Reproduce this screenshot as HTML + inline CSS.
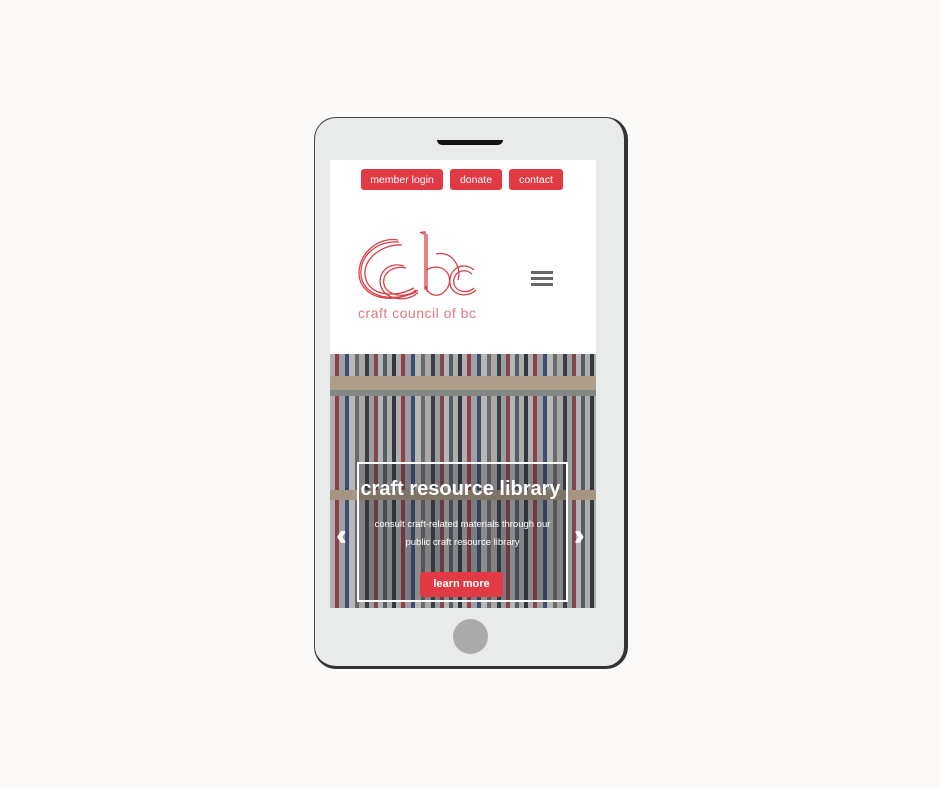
<!DOCTYPE html>
<html><head><style>
body{margin:0;width:940px;height:788px;background:#fbfaf8;position:relative;overflow:hidden;font-family:"Liberation Sans",sans-serif}
.phone{position:absolute;left:314px;top:117px;width:309px;height:548px;background:#e9eaea;border:1.5px solid #444;border-right:4px solid #333;border-bottom:3px solid #333;border-radius:22px}
.spk{position:absolute;left:437px;top:140px;width:66px;height:5px;background:#111;border-radius:0 0 6px 6px}
.screen{position:absolute;left:330px;top:160px;width:266px;height:448px;background:#fff;overflow:hidden}
.btn{position:absolute;top:9px;height:21px;background:#e23a44;color:#fff;font-size:10.5px;line-height:22px;text-align:center;border-radius:3px}
.photo{position:absolute;left:0;top:194px;width:266px;height:254px;background:
linear-gradient(to bottom,transparent 0 22px,#d9c4a8 22px 36px,#a0a49e 36px 42px,transparent 42px 136px,#cdb89c 136px 146px,transparent 146px),
repeating-linear-gradient(90deg,#dcdcda 0 5px,#b04048 5px 9px,#c4c8cc 9px 15px,#3d5282 15px 19px,#e8e8e6 19px 25px,#7a7a80 25px 29px,#d6d2cc 29px 35px,#3a404a 35px 39px,#c0c4c8 39px 44px,#a04a52 44px 48px,#e4e4e2 48px 53px,#5a6a7a 53px 57px,#dcd8d2 57px 62px,#2f3540 62px 66px);}
.shade{position:absolute;inset:0;background:rgba(60,60,65,.28)}
.box{position:absolute;left:27px;top:108px;width:207px;height:136px;border:2px solid #fff;background:rgba(40,40,45,.3);color:#fff;text-align:center}
.arrow{position:absolute;top:166px;color:#fff;font-size:26px;font-weight:bold;-webkit-text-stroke:1.5px #fff}
.home{position:absolute;left:453px;top:619px;width:35px;height:35px;border-radius:50%;background:#aaa}
</style></head><body>
<div class="phone"></div>
<div class="spk"></div>
<div class="screen">
 <div class="btn" style="left:31px;width:82px">member login</div>
 <div class="btn" style="left:120px;width:52px">donate</div>
 <div class="btn" style="left:179px;width:54px">contact</div>
 <svg style="position:absolute;left:24px;top:70px" width="130" height="95" viewBox="0 0 130 95">
  <g fill="none" stroke="#d9404a" stroke-width="1.3">
   <path d="M45 12 C20 10 2 30 8 50 C14 68 40 72 62 62"/>
   <path d="M48 15 C25 14 6 32 12 50 C18 66 42 68 60 58"/>
   <path d="M44 10 C22 6 0 28 6 50 C12 70 42 74 64 60"/>
   <path d="M50 36 C30 30 20 50 30 62 C40 72 58 70 64 62"/>
   <path d="M52 38 C34 34 24 50 33 60 C42 68 56 66 62 60"/>
   <path d="M68 2 L71 2 L71 60 M66 2 L70 4 M73 4 L73 62"/>
   <path d="M72 40 C90 30 102 48 92 60 C84 70 72 64 72 56"/>
   <path d="M82 24 C100 20 108 40 104 50"/>
   <path d="M120 40 C108 30 94 40 96 54 C98 66 114 68 122 60"/>
   <path d="M118 44 C108 36 98 44 100 54 C102 62 114 64 120 58"/>
  </g>
  <text x="4" y="88" font-size="14" fill="#e07880" font-family="Liberation Sans" letter-spacing="0.5">craft council of bc</text>
 </svg>
 <div style="position:absolute;left:201px;top:111px;width:22px">
  <div style="height:2.5px;background:#666;margin-bottom:3.5px"></div><div style="height:2.5px;background:#666;margin-bottom:3.5px"></div><div style="height:2.5px;background:#666"></div>
 </div>
 <div class="photo">
  <div class="shade"></div>
  <div class="arrow" style="left:7px">&#8249;</div>
  <div class="arrow" style="left:245px">&#8250;</div>
  <div class="box">
   <div style="font-size:20px;font-weight:bold;margin-top:14px;white-space:nowrap;margin-left:-4px">craft resource library</div>
   <div style="font-size:9.5px;line-height:17.5px;margin-top:15px">consult craft-related materials through our<br>public craft resource library</div>
   <div style="position:absolute;left:61px;top:108px;width:83px;height:25px;background:#e23a44;border-radius:3px;font-size:11px;font-weight:bold;line-height:25px">learn more</div>
  </div>
 </div>
</div>
<div class="home"></div>
</body></html>
